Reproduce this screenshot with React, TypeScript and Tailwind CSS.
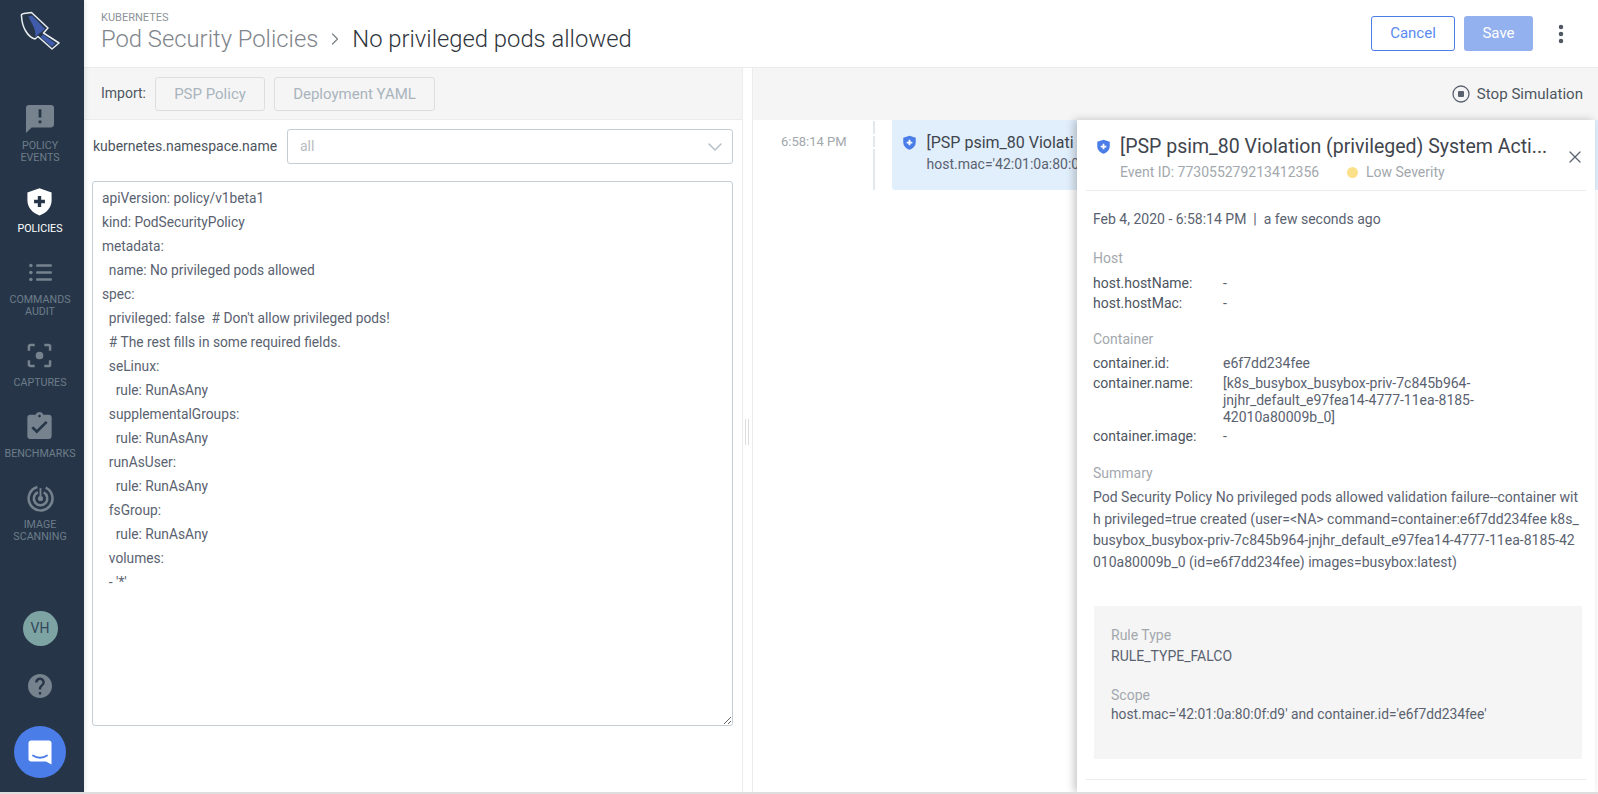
import { ChevronDown, ChevronRight, EllipsisVertical, X } from "lucide-react";
import type { ReactNode } from "react";

const YAML = `apiVersion: policy/v1beta1
kind: PodSecurityPolicy
metadata:
  name: No privileged pods allowed
spec:
  privileged: false  # Don't allow privileged pods!
  # The rest fills in some required fields.
  seLinux:
    rule: RunAsAny
  supplementalGroups:
    rule: RunAsAny
  runAsUser:
    rule: RunAsAny
  fsGroup:
    rule: RunAsAny
  volumes:
  - '*'`;

function Logo() {
  return (
    <svg width="40" height="39" viewBox="20 11 40 39" fill="none">
      <path d="M21.500 16 Q21 14 24 13.500 L31.500 12.500 L48 28 L43.500 33 L59 43 L52 49 L38 36.500 L35 39 C28 37 22 28 21.500 16 Z" fill="#263648" stroke="#e8edf2" strokeWidth="1.500" strokeLinejoin="round" />
      <path d="M28.500 16.500 L32 15.500 L45 29 L35 37 C37 30 31 23 28.500 16.500 Z" fill="#3f5ba9" />
      <path d="M43 34.500 L55.500 43.500 L51.500 46.500 L40.500 37 Z" fill="#3f5ba9" />
    </svg>
  );
}

function ShieldPlus({ size, bg, fg }: { size: number; bg: string; fg: string }) {
  return (
    <svg width={size} height={size} viewBox="0 0 24 24">
      <path d="M12 1 L22 4.500 V11 C22 17 18 21.500 12 23.500 C6 21.500 2 17 2 11 V4.500 Z" fill={bg} />
      <path d="M10.600 7.500h2.800v3.100h3.100v2.800h-3.100v3.100h-2.800v-3.100H7.500v-2.800h3.100z" fill={fg} />
    </svg>
  );
}

function NavItem({ icon, label, active, top, gap }: { icon: ReactNode; label: string[]; active?: boolean; top: string; gap: string }) {
  return (
    <div className={`flex flex-col items-center ${top}`}>
      {icon}
      <div className={`text-center text-[10.700px] leading-[12px] ${gap} ${active ? "text-white" : "text-[#6d7c8a]"}`}>
        {label.map((l) => (
          <div key={l}>{l}</div>
        ))}
      </div>
    </div>
  );
}

function Sidebar() {
  const c = "#76838f";
  return (
    <aside className="relative z-10 flex h-full w-[84px] shrink-0 flex-col items-center bg-[#263648] pr-[4px] shadow-[2px_0_4px_rgba(0,0,0,0.08)]">
      <div className="mt-[11px] h-[39px] w-[40px]">
        <Logo />
      </div>
      <NavItem
        top="mt-[55px]"
        gap="mt-[7px]"
        label={["POLICY", "EVENTS"]}
        icon={
          <svg width="28" height="28" viewBox="2 2 20 20" fill={c}>
            <path d="M20 2H4c-1.100 0-1.990.9-1.990 2L2 22l4-4h14c1.100 0 2-.9 2-2V4c0-1.100-.9-2-2-2zm-7 9h-2V5h2v6zm0 4h-2v-2h2v2z" />
          </svg>
        }
      />
      <NavItem
        top="mt-[23px]"
        gap="mt-[7px]"
        active
        label={["POLICIES"]}
        icon={<ShieldPlus size={29} bg="#ffffff" fg="#263648" />}
      />
      <NavItem
        top="mt-[27px]"
        gap="mt-[11px]"
        label={["COMMANDS", "AUDIT"]}
        icon={
          <svg width="25" height="21" viewBox="0 0 28 24" fill={c}>
            <circle cx="3" cy="4" r="2" />
            <circle cx="3" cy="12" r="2" />
            <circle cx="3" cy="20" r="2" />
            <rect x="9" y="2.500" width="18" height="3" rx="1" />
            <rect x="9" y="10.500" width="18" height="3" rx="1" />
            <rect x="9" y="18.500" width="18" height="3" rx="1" />
          </svg>
        }
      />
      <NavItem
        top="mt-[25px]"
        gap="mt-[9px]"
        label={["CAPTURES"]}
        icon={
          <svg width="25" height="25" viewBox="0 0 26 26" fill="none" stroke={c} strokeWidth="2.600">
            <path d="M2 8V3.500C2 2.700 2.700 2 3.500 2H8M18 2h4.500C23.300 2 24 2.700 24 3.500V8M24 18v4.500c0 .8-.7 1.500-1.500 1.500H18M8 24H3.500C2.700 24 2 23.300 2 22.500V18" />
            <circle cx="13" cy="13" r="4" fill={c} stroke="none" />
          </svg>
        }
      />
      <NavItem
        top="mt-[23px]"
        gap="mt-[9px]"
        label={["BENCHMARKS"]}
        icon={
          <svg width="25" height="27" viewBox="3 1 18 20" fill={c}>
            <path d="M19 3h-4.180C14.400 1.840 13.300 1 12 1c-1.300 0-2.400.84-2.820 2H5c-1.100 0-2 .9-2 2v14c0 1.100.9 2 2 2h14c1.100 0 2-.9 2-2V5c0-1.100-.9-2-2-2zm-7 0c.55 0 1 .45 1 1s-.45 1-1 1-1-.45-1-1 .45-1 1-1zm-2 14l-4-4 1.410-1.410L10 14.170l6.590-6.590L18 9l-8 8z" />
          </svg>
        }
      />
      <NavItem
        top="mt-[25px]"
        gap="mt-[7px]"
        label={["IMAGE", "SCANNING"]}
        icon={
          <svg width="27" height="27" viewBox="0 0 26 26" fill="none" stroke={c} strokeWidth="2.400">
            <path d="M10 1.900 A11.500 11.500 0 1 0 18 2.600" />
            <path d="M10.500 7 A6.500 6.500 0 1 0 16 7.200" />
            <path d="M13 3 V13" strokeWidth="1.800" />
            <circle cx="13" cy="13" r="2.500" fill={c} stroke="none" />
          </svg>
        }
      />
      <div className="mt-auto flex h-[35px] w-[35px] items-center justify-center rounded-full bg-[#7da3a3] text-[14px] text-[#33475a]">
        VH
      </div>
      <svg className="mt-[28px]" width="24" height="24" viewBox="2 2 20 20" fill={c}>
        <path d="M12 2C6.480 2 2 6.480 2 12s4.480 10 10 10 10-4.480 10-10S17.520 2 12 2zm1 17h-2v-2h2v2zm2.070-7.750l-.9.920C13.450 12.900 13 13.500 13 15h-2v-.5c0-1.100.45-2.100 1.170-2.830l1.240-1.260c.37-.36.59-.86.59-1.410 0-1.100-.9-2-2-2s-2 .9-2 2H8c0-2.210 1.790-4 4-4s4 1.790 4 4c0 .88-.36 1.680-.93 2.250z" />
      </svg>
      <div className="mb-[14px] mt-[28px] flex h-[52px] w-[52px] items-center justify-center rounded-full bg-[#4a7de8]">
        <svg width="24" height="25" viewBox="0 0 24 25" fill="none">
          <path d="M3 0.500H21C22.400 0.500 23.500 1.600 23.500 3V24.500L18 21.500H3C1.600 21.500 0.500 20.400 0.500 19V3C0.500 1.600 1.600 0.500 3 0.500Z" fill="#fff" />
          <path d="M5 15.500C9 18.500 15 18.500 19 15.500" stroke="#4a7de8" strokeWidth="1.800" strokeLinecap="round" />
        </svg>
      </div>
    </aside>
  );
}

function Field({ name, value }: { name: string; value: ReactNode }) {
  return (
    <div className="flex">
      <div className="w-[130px] shrink-0 text-[#4d5560]">{name}</div>
      <div className="w-[262px] pt-[2px] leading-[17px] text-[#5a6270]">{value}</div>
    </div>
  );
}

function DetailPanel() {
  return (
    <div className="absolute bottom-0 left-[1077px] top-[120px] w-[518px] bg-white shadow-[-3px_0_8px_rgba(0,0,0,0.22)]">
      <div className="relative mx-[9px] h-[71px] border-b border-[#ececec] pl-[34px] pt-[13px]">
        <div className="absolute left-[10px] top-[19px]">
          <ShieldPlus size={15} bg="#4a7de8" fg="#ffffff" />
        </div>
        <div className="truncate text-[19.500px] leading-[28px] text-[#3f454d]">[PSP psim_80 Violation (privileged) System Acti...</div>
        <div className="mt-[3px] flex items-center text-[14px] leading-[16px] text-[#a3a8ad]">
          <span className="w-[227px]">Event ID: 773055279213412356</span>
          <span className="h-[11px] w-[11px] rounded-full bg-[#fbe08a]" />
          <span className="ml-[8px]">Low Severity</span>
        </div>
        <X className="absolute left-[479px] top-[27px] text-[#5a6270]" size={20} strokeWidth={1.500} />
      </div>
      <div className="pl-[16px] pr-[16px] text-[14px] leading-[20px] text-[#5a6270]">
        <div className="mt-[18px]">Feb 4, 2020 - 6:58:14 PM &nbsp;|&nbsp; a few seconds ago</div>
        <div className="mt-[19px] text-[#a3a8ad]">Host</div>
        <div className="mt-[5px]">
          <Field name="host.hostName:" value="-" />
          <Field name="host.hostMac:" value="-" />
        </div>
        <div className="mt-[16px] text-[#a3a8ad]">Container</div>
        <div className="mt-[4px]">
          <Field name="container.id:" value="e6f7dd234fee" />
          <Field name="container.name:" value="[k8s_busybox_busybox-priv-7c845b964-jnjhr_default_e97fea14-4777-11ea-8185-42010a80009b_0]" />
          <Field name="container.image:" value="-" />
        </div>
        <div className="mt-[17px] text-[#a3a8ad]">Summary</div>
        <div className="mt-[4px] w-[486px] break-all leading-[21.500px]">
          Pod Security Policy No privileged pods allowed validation failure--container with privileged=true created (user=&lt;NA&gt; command=container:e6f7dd234fee k8s_busybox_busybox-priv-7c845b964-jnjhr_default_e97fea14-4777-11ea-8185-42010a80009b_0 (id=e6f7dd234fee) images=busybox:latest)
        </div>
        <div className="ml-[1px] mr-[-3px] mt-[33px] h-[153px] bg-[#f5f5f5] px-[17px] pt-[19px]">
          <div className="text-[#a3a8ad]">Rule Type</div>
          <div className="mt-[1px]">RULE_TYPE_FALCO</div>
          <div className="mt-[19px] text-[#a3a8ad]">Scope</div>
          <div className="mt-[-1px] text-[13.800px]">host.mac='42:01:0a:80:0f:d9' and container.id='e6f7dd234fee'</div>
        </div>
      </div>
      <div className="mx-[9px] mt-[20px] border-t border-[#ececec]" />
    </div>
  );
}

export default function App() {
  return (
    <div className="relative flex h-[794px] w-[1598px] overflow-hidden border-b-2 border-[#dedede] bg-white font-['Roboto',sans-serif] text-[14px]">
      <Sidebar />
      <div className="flex min-w-0 flex-1 flex-col">
        <header className="flex h-[68px] shrink-0 items-center border-b border-[#ebebeb] pl-[17px] pr-[25px]">
          <div className="flex-1 pb-[3px]">
            <div className="text-[11px] leading-[13px] text-[#8d9399]">KUBERNETES</div>
            <div className="flex items-center text-[23.800px] font-light leading-[30px]">
              <span className="text-[#7f858b]">Pod Security Policies</span>
              <ChevronRight className="mx-[7px] text-[#7c8288]" size={20} strokeWidth={1.500} />
              <span className="text-[#2f353c]">No privileged pods allowed</span>
            </div>
          </div>
          <button className="h-[35px] w-[84px] rounded-[3px] border border-[#4a7de8] text-[15px] text-[#5b8af0]">Cancel</button>
          <button className="ml-[9px] h-[35px] w-[69px] rounded-[3px] bg-[#94b1ef] text-[15px] text-white">Save</button>
          <EllipsisVertical className="ml-[16px] text-[#4d5560]" size={24} strokeWidth={2.500} />
        </header>
        <div className="flex min-h-0 flex-1">
          <section className="flex w-[659px] shrink-0 flex-col border-r border-[#ececec]">
            <div className="flex h-[52px] shrink-0 items-center gap-[9px] border-b border-[#ececec] bg-[#f5f5f5] pl-[17px]">
              <span className="text-[#4d5560]">Import:</span>
              <button className="h-[34px] w-[110px] rounded-[3px] border border-[#dcdfe2] pt-[1px] text-[15px] text-[#a9b4bd]">PSP Policy</button>
              <button className="h-[34px] w-[161px] rounded-[3px] border border-[#dcdfe2] pt-[1px] text-[15px] text-[#a9b4bd]">Deployment YAML</button>
            </div>
            <div className="flex flex-1 flex-col px-[9px] pt-[9px]">
              <div className="flex items-center">
                <span className="w-[194px] text-[#4d5560]">kubernetes.namespace.name</span>
                <div className="flex h-[35px] flex-1 items-center justify-between rounded-[3px] border border-[#c3ced6] pl-[12px] pr-[5px] text-[#b9bdc1]">
                  all
                  <ChevronDown className="text-[#b5c0c8]" size={24} strokeWidth={1.500} />
                </div>
              </div>
              <textarea
                defaultValue={YAML}
                spellCheck={false}
                className="ml-[-1px] mt-[17px] h-[545px] w-[641px] rounded-[3px] border border-[#c3ced6] px-[9px] pt-[4px] text-[13.750px] leading-[24px] text-[#5a6270] outline-none"
              />
            </div>
          </section>
          <div className="relative w-[9px] shrink-0 bg-white">
            <div className="absolute left-[2px] top-[351px] h-[26px] w-[1px] bg-[#dcdcdc]" />
            <div className="absolute left-[5px] top-[351px] h-[26px] w-[1px] bg-[#dcdcdc]" />
          </div>
          <section className="flex min-w-0 flex-1 flex-col border-l border-[#ececec]">
            <div className="flex h-[52px] shrink-0 items-center justify-end gap-[7px] bg-[#f5f5f5] pr-[15px] text-[15.100px] text-[#4d5560]">
              <svg width="18" height="18" viewBox="0 0 18 18" fill="none">
                <circle cx="9" cy="9" r="8" stroke="#5a6270" strokeWidth="1.300" />
                <rect x="6" y="6" width="6" height="6" rx="1" fill="#5a6270" />
              </svg>
              Stop Simulation
            </div>
            <div className="flex h-[70px] shrink-0">
              <div className="w-[120px] whitespace-nowrap pl-[28px] pt-[13px] text-[13px] leading-[18px] text-[#a3a8ad]">6:58:14 PM</div>
              <div className="flex w-[1.500px] flex-col gap-[2px] pt-[1px]">
                <div className="h-[13px] bg-[#e3e8ea]" />
                <div className="h-[11px] bg-[#e3e8ea]" />
                <div className="flex-1 bg-[#e3e8ea]" />
              </div>
              <div className="ml-[17px] flex flex-1 gap-[10px] rounded-bl-[3px] bg-[#e1eefb] pl-[10px] pt-[13px]">
                <div className="pt-[2px]">
                  <ShieldPlus size={15} bg="#4a7de8" fg="#ffffff" />
                </div>
                <div className="whitespace-nowrap">
                  <div className="text-[16px] leading-[20px] text-[#3f454d]">[PSP psim_80 Violati</div>
                  <div className="mt-[2px] text-[14px] leading-[18px] text-[#5a6270]">host.mac='42:01:0a:80:0</div>
                </div>
              </div>
            </div>
          </section>
        </div>
      </div>
      <DetailPanel />
    </div>
  );
}
